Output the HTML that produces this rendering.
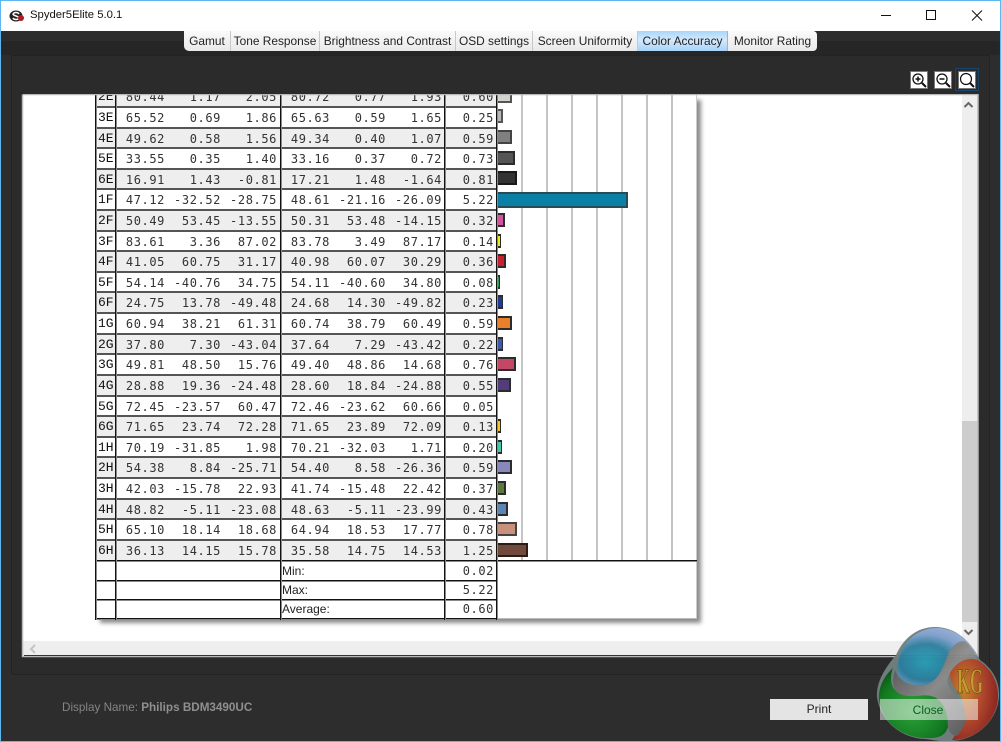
<!DOCTYPE html>
<html><head><meta charset="utf-8"><title>Spyder5Elite 5.0.1</title>
<style>
html,body{margin:0;padding:0}
body{width:1001px;height:742px;position:relative;overflow:hidden;background:#2d2d2d;font-family:"Liberation Sans",sans-serif}
.a{position:absolute}
#tb{left:0;top:0;width:1001px;height:31px;background:#fff}
#ttl{left:30px;top:9px;font-size:11.3px;color:#111}
.edge{background:#5fb7f2}
.tab{position:absolute;top:31px;height:20px;font-size:11.9px;line-height:20px;color:#222;text-align:center;background:linear-gradient(#fafafa,#e9e9e9);border-right:1px solid #c8c8c8;box-sizing:border-box;white-space:nowrap}
#view{left:23px;top:95px;width:955px;height:561px;background:#fff;overflow:hidden}
#tbl{left:0;top:0;width:1001px;height:742px;filter:blur(.35px)}
.r{position:absolute;left:96px;width:401px;height:21px;box-sizing:border-box;border-top:2px solid #555;background:#fff}
.g{background:#eee}
.r span{position:absolute;top:3px;width:70px;text-align:right;font:12px/14px "DejaVu Sans Mono",monospace;letter-spacing:.6px;color:#333}
.r .l{left:2px;width:18px;text-align:left;font:13px/14px "Liberation Mono",monospace;letter-spacing:0;color:#111}
.c1{left:-1px}.c2{left:55px}.c3{left:111px}.c4{left:164px}.c5{left:220px}.c6{left:276px}.c7{left:328px}
.v{position:absolute;width:2px;background:linear-gradient(90deg,#111 0 1px,#8a8a8a 1px 2px)}
.gl{position:absolute;top:0;width:2px;height:466px;background:#c4c4c4}
.b{position:absolute;left:474px;height:14px;box-sizing:border-box;border:2px solid #2c2c2c;border-left:1px solid #2c2c2c}
.th{border-right-width:1px}
.h{position:absolute;left:73px;width:401px;height:2px;background:linear-gradient(#111 0 1px,#8a8a8a 1px 2px)}
.lb{position:absolute;left:259px;font-size:12px;line-height:14px;color:#222}
.zi{position:absolute;top:71px;width:18px;height:18px;background:#fff;border:1px solid #777;box-sizing:border-box}
.btn{position:absolute;top:699px;width:98px;height:21px;font-size:12px;line-height:21px;text-align:center}
</style></head><body>
<div class="a" style="left:0;top:31px;width:1001px;height:711px;background:#2d2d2d"></div>
<div class="a" style="left:1px;top:41px;width:999px;height:14px;background:#262626;border-radius:3px"></div>
<div class="a" style="left:11px;top:55px;width:979px;height:620px;background:#2b2b2b;border:1px solid #232323;border-radius:0 0 4px 4px;box-sizing:border-box"></div>

<div class="a" id="tb"></div>
<svg class="a" style="left:9px;top:8px" width="16" height="16" viewBox="0 0 16 16"><ellipse cx="7" cy="8" rx="6.5" ry="5.5" fill="#222"/><path d="M4 6c1-2 5-2 6 0M4 10c1 2 5 2 6 0M4 6c0 2 6 2 6 4" stroke="#fff" stroke-width="1.5" fill="none"/><circle cx="12" cy="10" r="3" fill="#b01822"/></svg>
<div class="a" id="ttl">Spyder5Elite 5.0.1</div>
<svg class="a" style="left:870px;top:0" width="131" height="31"><path d="M11 15.500h10" stroke="#111"/><rect x="56.500" y="10.500" width="9" height="9" fill="none" stroke="#111" stroke-width="1"/><path d="M102 10.500l10 10M112 10.500l-10 10" stroke="#111"/></svg>

<div class="tab" style="left:184px;width:47px;border-radius:0 0 0 5px">Gamut</div>
<div class="tab" style="left:231px;width:89px">Tone Response</div>
<div class="tab" style="left:320px;width:136px">Brightness and Contrast</div>
<div class="tab" style="left:456px;width:77px">OSD settings</div>
<div class="tab" style="left:533px;width:105px">Screen Uniformity</div>
<div class="tab" style="left:638px;width:90px;background:linear-gradient(#a8d6fb,#d4e9fb 45%,#a5d2f9);border-right:1px solid #8ab8e0">Color Accuracy</div>
<div class="tab" style="left:728px;width:89px;border-right:0;border-radius:0 4px 4px 0">Monitor Rating</div>

<div class="a" style="left:955px;top:68px;width:24px;height:23px;border:1px solid #17456e;box-sizing:border-box"></div>
<div class="zi" style="left:910px"></div><div class="zi" style="left:934px"></div><div class="zi" style="left:958px"></div>
<svg class="a" style="left:910px;top:71px" width="68" height="18" fill="none" stroke="#111"><circle cx="8" cy="8" r="5" stroke-width="1.300"/><path d="M12 12l4 4" stroke-width="2"/><path d="M5.500 8h5M8 5.500v5" stroke-width="1.500"/><circle cx="32" cy="8" r="5" stroke-width="1.300"/><path d="M36 12l4 4" stroke-width="2"/><path d="M29.500 8h5" stroke-width="1.500"/><circle cx="56" cy="8" r="5.500" stroke-width="1.200"/><path d="M60 12l4 4" stroke-width="2"/></svg>

<div class="a" id="view">
<div class="a" id="tbl" style="left:-23px;top:-95px">
<div class="a" style="left:100px;top:100px;width:601px;height:523px;background:#8a8a8a;filter:blur(2px)"></div>
<div class="a" style="left:96px;top:85px;width:601px;height:534px;background:#fff"></div>
<div class="gl" style="left:521px;top:85px;height:476px"></div><div class="gl" style="left:546px;top:85px;height:476px"></div><div class="gl" style="left:571px;top:85px;height:476px"></div><div class="gl" style="left:596px;top:85px;height:476px"></div><div class="gl" style="left:621px;top:85px;height:476px"></div><div class="gl" style="left:646px;top:85px;height:476px"></div><div class="gl" style="left:671px;top:85px;height:476px"></div>
<div class="gl" style="left:696px;top:85px;height:534px;width:1px;background:#ccc"></div>

<div class="r g" style="top:85px"><span class="l">2E</span><span class="c1">80.44</span><span class="c2">1.17</span><span class="c3">2.05</span><span class="c4">80.72</span><span class="c5">0.77</span><span class="c6">1.93</span><span class="c7">0.60</span></div>
<div class="r" style="top:106px"><span class="l">3E</span><span class="c1">65.52</span><span class="c2">0.69</span><span class="c3">1.86</span><span class="c4">65.63</span><span class="c5">0.59</span><span class="c6">1.65</span><span class="c7">0.25</span></div>
<div class="r g" style="top:127px"><span class="l">4E</span><span class="c1">49.62</span><span class="c2">0.58</span><span class="c3">1.56</span><span class="c4">49.34</span><span class="c5">0.40</span><span class="c6">1.07</span><span class="c7">0.59</span></div>
<div class="r" style="top:147px"><span class="l">5E</span><span class="c1">33.55</span><span class="c2">0.35</span><span class="c3">1.40</span><span class="c4">33.16</span><span class="c5">0.37</span><span class="c6">0.72</span><span class="c7">0.73</span></div>
<div class="r g" style="top:168px"><span class="l">6E</span><span class="c1">16.91</span><span class="c2">1.43</span><span class="c3">-0.81</span><span class="c4">17.21</span><span class="c5">1.48</span><span class="c6">-1.64</span><span class="c7">0.81</span></div>
<div class="r" style="top:188px"><span class="l">1F</span><span class="c1">47.12</span><span class="c2">-32.52</span><span class="c3">-28.75</span><span class="c4">48.61</span><span class="c5">-21.16</span><span class="c6">-26.09</span><span class="c7">5.22</span></div>
<div class="r g" style="top:209px"><span class="l">2F</span><span class="c1">50.49</span><span class="c2">53.45</span><span class="c3">-13.55</span><span class="c4">50.31</span><span class="c5">53.48</span><span class="c6">-14.15</span><span class="c7">0.32</span></div>
<div class="r" style="top:230px"><span class="l">3F</span><span class="c1">83.61</span><span class="c2">3.36</span><span class="c3">87.02</span><span class="c4">83.78</span><span class="c5">3.49</span><span class="c6">87.17</span><span class="c7">0.14</span></div>
<div class="r g" style="top:250px"><span class="l">4F</span><span class="c1">41.05</span><span class="c2">60.75</span><span class="c3">31.17</span><span class="c4">40.98</span><span class="c5">60.07</span><span class="c6">30.29</span><span class="c7">0.36</span></div>
<div class="r" style="top:271px"><span class="l">5F</span><span class="c1">54.14</span><span class="c2">-40.76</span><span class="c3">34.75</span><span class="c4">54.11</span><span class="c5">-40.60</span><span class="c6">34.80</span><span class="c7">0.08</span></div>
<div class="r g" style="top:291px"><span class="l">6F</span><span class="c1">24.75</span><span class="c2">13.78</span><span class="c3">-49.48</span><span class="c4">24.68</span><span class="c5">14.30</span><span class="c6">-49.82</span><span class="c7">0.23</span></div>
<div class="r" style="top:312px"><span class="l">1G</span><span class="c1">60.94</span><span class="c2">38.21</span><span class="c3">61.31</span><span class="c4">60.74</span><span class="c5">38.79</span><span class="c6">60.49</span><span class="c7">0.59</span></div>
<div class="r g" style="top:333px"><span class="l">2G</span><span class="c1">37.80</span><span class="c2">7.30</span><span class="c3">-43.04</span><span class="c4">37.64</span><span class="c5">7.29</span><span class="c6">-43.42</span><span class="c7">0.22</span></div>
<div class="r" style="top:353px"><span class="l">3G</span><span class="c1">49.81</span><span class="c2">48.50</span><span class="c3">15.76</span><span class="c4">49.40</span><span class="c5">48.86</span><span class="c6">14.68</span><span class="c7">0.76</span></div>
<div class="r g" style="top:374px"><span class="l">4G</span><span class="c1">28.88</span><span class="c2">19.36</span><span class="c3">-24.48</span><span class="c4">28.60</span><span class="c5">18.84</span><span class="c6">-24.88</span><span class="c7">0.55</span></div>
<div class="r" style="top:395px"><span class="l">5G</span><span class="c1">72.45</span><span class="c2">-23.57</span><span class="c3">60.47</span><span class="c4">72.46</span><span class="c5">-23.62</span><span class="c6">60.66</span><span class="c7">0.05</span></div>
<div class="r g" style="top:415px"><span class="l">6G</span><span class="c1">71.65</span><span class="c2">23.74</span><span class="c3">72.28</span><span class="c4">71.65</span><span class="c5">23.89</span><span class="c6">72.09</span><span class="c7">0.13</span></div>
<div class="r" style="top:436px"><span class="l">1H</span><span class="c1">70.19</span><span class="c2">-31.85</span><span class="c3">1.98</span><span class="c4">70.21</span><span class="c5">-32.03</span><span class="c6">1.71</span><span class="c7">0.20</span></div>
<div class="r g" style="top:456px"><span class="l">2H</span><span class="c1">54.38</span><span class="c2">8.84</span><span class="c3">-25.71</span><span class="c4">54.40</span><span class="c5">8.58</span><span class="c6">-26.36</span><span class="c7">0.59</span></div>
<div class="r" style="top:477px"><span class="l">3H</span><span class="c1">42.03</span><span class="c2">-15.78</span><span class="c3">22.93</span><span class="c4">41.74</span><span class="c5">-15.48</span><span class="c6">22.42</span><span class="c7">0.37</span></div>
<div class="r g" style="top:498px"><span class="l">4H</span><span class="c1">48.82</span><span class="c2">-5.11</span><span class="c3">-23.08</span><span class="c4">48.63</span><span class="c5">-5.11</span><span class="c6">-23.99</span><span class="c7">0.43</span></div>
<div class="r" style="top:518px"><span class="l">5H</span><span class="c1">65.10</span><span class="c2">18.14</span><span class="c3">18.68</span><span class="c4">64.94</span><span class="c5">18.53</span><span class="c6">17.77</span><span class="c7">0.78</span></div>
<div class="r g" style="top:539px"><span class="l">6H</span><span class="c1">36.13</span><span class="c2">14.15</span><span class="c3">15.78</span><span class="c4">35.58</span><span class="c5">14.75</span><span class="c6">14.53</span><span class="c7">1.25</span></div>

<div class="b" style="left:497px;top:89px;width:15px;background:#d2d2ce;border-color:#555"></div>
<div class="b" style="left:497px;top:109px;width:6px;background:#b8b8b4;border-color:#555"></div>
<div class="b" style="left:497px;top:130px;width:15px;background:#808080;border-color:#444"></div>
<div class="b" style="left:497px;top:151px;width:18px;background:#555"></div>
<div class="b" style="left:497px;top:171px;width:20px;background:#333;border-color:#1a1a1a"></div>
<div class="b" style="left:497px;top:192px;width:131px;height:16px;background:#0a80a5;border-color:#2a4a58"></div>
<div class="b" style="left:497px;top:213px;width:8px;background:#d1559c"></div>
<div class="b th" style="left:497px;top:234px;width:4px;background:#efe915"></div>
<div class="b" style="left:497px;top:254px;width:9px;background:#c8202f"></div>
<div class="b th" style="left:497px;top:275px;width:3px;background:#2f8f50"></div>
<div class="b th" style="left:497px;top:295px;width:6px;background:#1f3a94"></div>
<div class="b" style="left:497px;top:316px;width:15px;background:#e8802c"></div>
<div class="b th" style="left:497px;top:337px;width:6px;background:#3c5aa8"></div>
<div class="b" style="left:497px;top:357px;width:19px;background:#c44866"></div>
<div class="b" style="left:497px;top:378px;width:14px;background:#533c7a"></div>
<div class="a" style="left:497px;top:399px;width:1px;height:14px;background:#222"></div>
<div class="b th" style="left:497px;top:419px;width:4px;background:#f2c820"></div>
<div class="b th" style="left:497px;top:440px;width:5px;background:#45c8a8"></div>
<div class="b" style="left:497px;top:460px;width:15px;background:#8888bb"></div>
<div class="b" style="left:497px;top:481px;width:9px;background:#5c7a3c"></div>
<div class="b" style="left:497px;top:502px;width:11px;background:#5a85b5"></div>
<div class="b" style="left:497px;top:522px;width:20px;background:#c8917c;border-color:#444"></div>
<div class="b" style="left:497px;top:543px;width:31px;background:#704a3c;border-color:#2c1c14"></div>

<div class="h" style="top:560px;width:601px;left:96px"></div>
<div class="h" style="top:580px;left:96px"></div>
<div class="h" style="top:599px;left:96px"></div>
<div class="h" style="top:618px;left:96px;width:401px"></div>
<div class="a" style="left:497px;top:618px;width:200px;height:1px;background:#bbb"></div>
<div class="v" style="left:95px;top:85px;height:535px"></div>
<div class="v" style="left:115px;top:85px;height:535px"></div>
<div class="v" style="left:280px;top:85px;height:535px"></div>
<div class="v" style="left:444px;top:85px;height:535px"></div>
<div class="v" style="left:496px;top:85px;height:535px"></div>
<div class="lb" style="left:282px;top:564px">Min:</div>
<div class="lb" style="left:282px;top:583px">Max:</div>
<div class="lb" style="left:282px;top:602px">Average:</div>
<div class="r" style="left:424px;width:70px;top:562px;border:0;background:none"><span style="left:0;top:2px">0.02</span></div>
<div class="r" style="left:424px;width:70px;top:582px;border:0;background:none"><span style="left:0;top:1px">5.22</span></div>
<div class="r" style="left:424px;width:70px;top:601px;border:0;background:none"><span style="left:0;top:1px">0.60</span></div>
</div>
</div>

<div class="a" style="left:962px;top:95px;width:16px;height:546px;background:#eee"></div>
<div class="a" style="left:962px;top:421px;width:16px;height:201px;background:#cdcdcd"></div>
<div class="a" style="left:23px;top:641px;width:955px;height:15px;background:#eee"></div>
<svg class="a" style="left:21px;top:94px" width="962" height="566" fill="none"><path d="M1.500 0.500V562.500H957V0.500H2" stroke="#b9b9b9" stroke-width="1.500"/><path d="M3 561.500H956" stroke="#333"/><path d="M943.500 13l4-4 4 4" stroke="#666" stroke-width="2"/><path d="M943.500 536l4 4 4-4" stroke="#666" stroke-width="2"/><path d="M14 551l-4 4 4 4" stroke="#c4c4c4" stroke-width="2"/></svg>

<div class="a" style="left:62px;top:701px;font-size:11.7px;line-height:14px;color:#858585">Display Name: <b style="color:#8f8f8f">Philips BDM3490UC</b></div>
<div class="btn" style="left:770px;background:#e4e4e4;color:#222">Print</div>

<svg class="a" style="left:0;top:0" width="1001" height="742">
<defs>
<radialGradient id="bl" cx=".35" cy=".6" r=".7"><stop offset="0" stop-color="#2aa0b8"/><stop offset=".45" stop-color="#2e7f9e"/><stop offset=".7" stop-color="#7f9fcb"/><stop offset="1" stop-color="#9db0d8"/></radialGradient>
<radialGradient id="rd" cx=".3" cy=".4" r=".75"><stop offset="0" stop-color="#c98a2a"/><stop offset=".5" stop-color="#b44a2c"/><stop offset="1" stop-color="#8a2020"/></radialGradient>
<radialGradient id="gr" cx=".5" cy=".6" r=".7"><stop offset="0" stop-color="#2ca83a"/><stop offset=".7" stop-color="#127a20"/><stop offset="1" stop-color="#0a4a14"/></radialGradient>
<linearGradient id="gy" x1="0" y1="0" x2="1" y2="1"><stop offset="0" stop-color="#4a4a4a"/><stop offset=".5" stop-color="#8e8e8e"/><stop offset="1" stop-color="#555"/></linearGradient>
</defs>
<g opacity=".97">
<path d="M896 655C905 635 920 627 935 627C955 627 970 640 980 660C995 670 1000 685 999 697C997 722 975 741 950 741C940 742 935 740 925 739C900 738 880 720 877 697C876 682 885 668 896 655Z" fill="#70807f"/>
<path d="M897 668C900 640 920 628 936 628C955 628 970 640 978 658C965 640 958 640 950 650C942 665 940 685 922 685C905 686 897 680 897 668Z" fill="url(#bl)"/>
<path d="M961 655C985 657 999 678 998 697C997 720 977 740 952 740C962 725 968 708 960 695C948 682 945 668 961 655Z" fill="url(#rd)"/>
<path d="M893 668C882 678 878 690 879 700C883 725 905 739 930 738C942 738 946 733 948 727C948 712 945 700 935 697C920 693 905 699 895 690C890 685 890 675 893 668Z" fill="url(#gr)"/>
<path d="M895 670C898 680 910 686 922 686C938 684 945 665 951 650C955 642 962 640 966 642C972 648 975 652 977 660C965 656 952 665 948 678C946 690 958 695 964 708C968 720 965 725 958 735C955 737 950 735 948 727C948 705 938 695 925 695C912 697 900 697 895 690C892 683 893 677 895 670Z" fill="url(#gy)"/>
<text x="957" y="693" font-family="Liberation Serif,serif" font-weight="bold" font-size="36" fill="#c9a033" stroke="#6a4a10" stroke-width=".7" textLength="26" lengthAdjust="spacingAndGlyphs">KG</text>
</g>
<rect x="880" y="699" width="98" height="21" fill="#fff" fill-opacity=".5"/>
<text x="928" y="714" text-anchor="middle" font-family="Liberation Sans,sans-serif" font-size="12" fill="#0d5f22">Close</text>
</svg>

<div class="a edge" style="left:0;top:0;width:1001px;height:1px"></div>
<div class="a edge" style="left:0;top:0;width:1px;height:742px"></div>
<div class="a edge" style="left:1000px;top:0;width:1px;height:742px"></div>
<div class="a edge" style="left:0;top:741px;width:1001px;height:1px"></div>
</body></html>
